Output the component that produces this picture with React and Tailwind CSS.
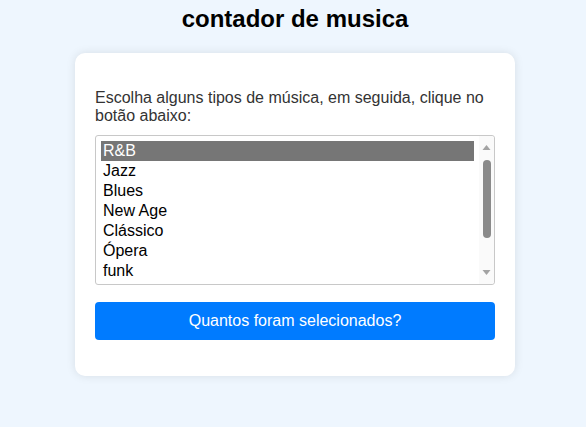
const generos = ['R&B', 'Jazz', 'Blues', 'New Age', 'Clássico', 'Ópera', 'funk'];

export default function App() {
  return (
    <div className="min-h-[427px] bg-[#eef6fe] font-['Liberation_Sans',Arial,sans-serif] text-[#333] pt-[5px] pl-[4px]">
      <h1 className="text-center text-[24px] font-bold text-black leading-[28px] mb-[20px]">
        contador de musica
      </h1>

      <div className="mx-auto w-[440px] bg-white rounded-[10px] shadow-[0_0_10px_rgba(0,0,0,0.1)] px-[20px] pt-[36px] pb-[36px]">
        <p className="text-[16px] leading-[18px] mb-[10px]">
          Escolha alguns tipos de música, em seguida, clique no botão abaixo:
        </p>

        <div className="flex h-[150px] border border-[#c8c8c8] rounded-[3px] bg-white">
          <div className="flex-1 pl-[5px] pt-[5px] pr-[5px]">
            {generos.map((g, i) => (
              <div
                key={g}
                className={
                  'h-[20px] leading-[20px] pl-[2px] text-[16px] ' +
                  (i === 0 ? 'bg-[#767676] text-white' : 'text-black')
                }
              >
                {g}
              </div>
            ))}
          </div>
          <div className="w-[15px] flex flex-col items-center bg-[#fafafa] rounded-r-[3px]">
            <svg width="15" height="17" viewBox="0 0 15 17">
              <path d="M3.5 14 L7.5 9 L11.5 14 Z" fill="#a3a3a3" />
            </svg>
            <div className="w-[8px] h-[78px] mt-[7px] rounded-[4px] bg-[#8a8a8a]" />
            <div className="flex-1" />
            <svg width="15" height="17" viewBox="0 0 15 17">
              <path d="M3.5 3 L7.5 8 L11.5 3 Z" fill="#a3a3a3" />
            </svg>
          </div>
        </div>

        <button className="mt-[17px] w-full h-[38px] bg-[#007bff] text-white text-[16px] rounded-[4px]">
          Quantos foram selecionados?
        </button>
      </div>
    </div>
  );
}
